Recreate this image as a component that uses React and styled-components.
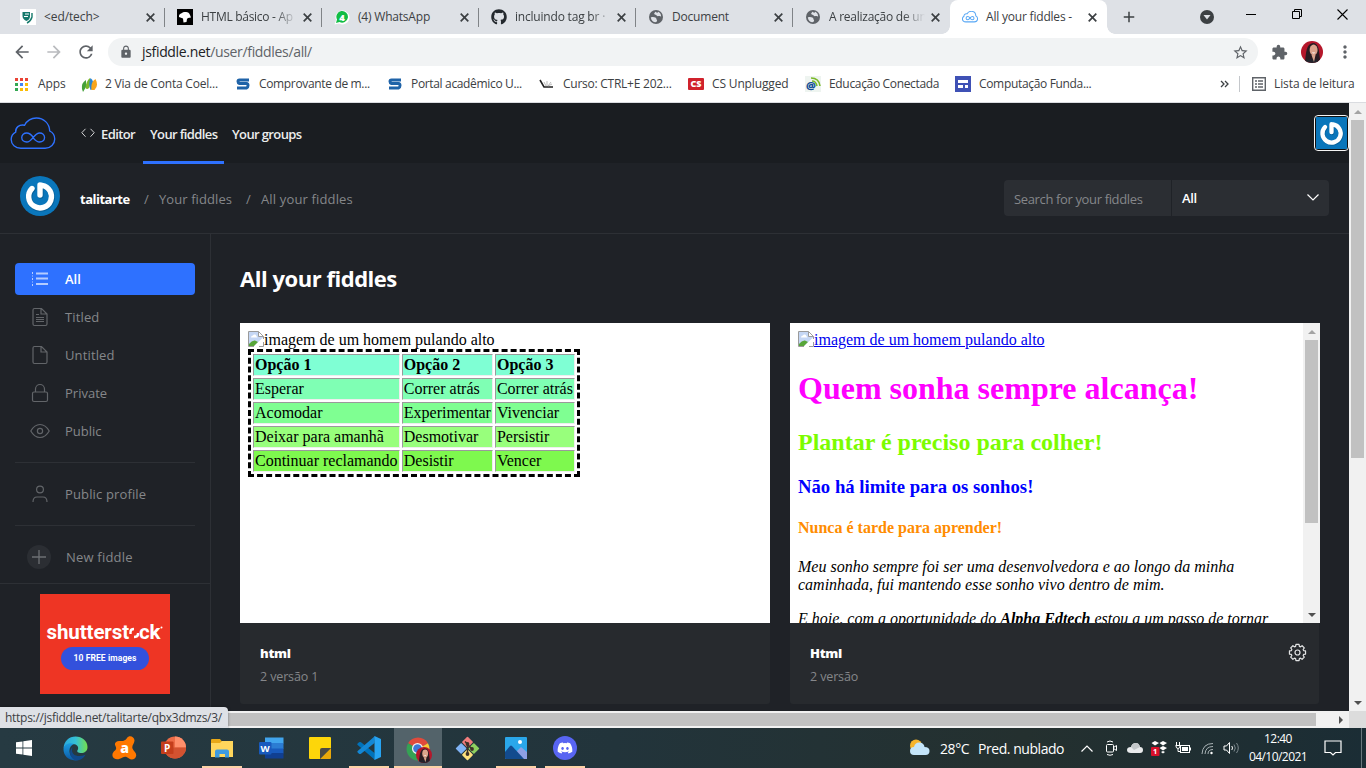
import React from "react";
import styled, { createGlobalStyle, css } from "styled-components";
import {
  MdArrowBack, MdArrowForward, MdRefresh, MdLock, MdStarBorder, MdExtension, MdMoreVert, MdAdd,
} from "react-icons/md";
import { FaGithub, FaDiscord } from "react-icons/fa";

const UI = '"Open Sans", "Noto Sans", "Liberation Sans", sans-serif';
const SERIF = '"Liberation Serif", serif';

const Global = createGlobalStyle`
  html, body { margin: 0; padding: 0; overflow: hidden; }
  * { box-sizing: border-box; }
  svg { display: block; flex: none; }
`;

const Screen = styled.div`
  width: 1366px; height: 768px; display: flex; flex-direction: column;
  overflow: hidden; font-family: ${UI}; background: #1f2227;
`;

/* ---------- Browser chrome ---------- */
const TabStrip = styled.div`
  height: 34px; flex: none; display: flex; background: #dee1e6; padding-left: 8px;
`;
const Tab = styled.div`
  width: 157px; height: 34px; flex: none; position: relative; display: flex; align-items: center;
  padding: 0 10px 0 12px; color: #3c4043;
  border-radius: 8px 8px 0 0;
  background: ${(p) => (p.$active ? "#fff" : "transparent")};
  ${(p) => p.$line && css`
    &::after { content: ""; position: absolute; right: 0; top: 8px; width: 1px; height: 19px; background: #808387; }
  `}
  ${(p) => p.$active && css`
    &::before, &::after { content: ""; position: absolute; bottom: 0; width: 8px; height: 8px; }
    &::before { left: -8px; background: radial-gradient(circle at 0 0, transparent 7.5px, #fff 8px); }
    &::after { right: -8px; background: radial-gradient(circle at 100% 0, transparent 7.5px, #fff 8px); }
  `}
`;
const TabTitle = styled.span`
  margin-left: 8px; flex: 1; height: 18px; white-space: nowrap; line-height: 18px;
  font-size: 12px; letter-spacing: ${(p) => p.$ls || 0}px;
  ${(p) => p.$fade && css`mask-image: linear-gradient(90deg, #000 ${p.$fade - 22}px, transparent ${p.$fade}px);`}
`;
const TabClose = () => (
  <svg width="9" height="9" viewBox="0 0 9 9" stroke="#3c4043" strokeWidth="1.700"><path d="M.7.700l7.600 7.600M8.300.700.7 8.300" /></svg>
);
const WindowButtons = styled.div`
  flex: 1; display: flex; align-items: center; height: 34px; color: #3c4043;
  & > :nth-child(1) { margin-left: 13px; }
  & > :nth-child(2) { margin-left: 62px; }
  & > :nth-child(3) { margin-left: 32px; margin-bottom: 6px; }
  & > :nth-child(4) { margin-left: 36px; margin-bottom: 6px; }
  & > :nth-child(5) { margin-left: 35px; margin-bottom: 6px; }
`;
const Toolbar = styled.div`
  height: 36px; flex: none; background: #fff; display: flex; align-items: center; color: #5f6368;
`;
const NavButtons = styled.div`
  width: 108px; display: flex; padding-left: 12px; gap: 12px;
`;
const Omnibox = styled.div`
  width: 1150px; height: 28px; border-radius: 14px; background: #f1f3f4; display: flex; align-items: center;
  padding: 0 9px 0 11px;
`;
const Url = styled.span`
  margin-left: 9px; flex: 1; font-size: 14px; line-height: 20px; color: #5f6368; letter-spacing: -0.33px;
  b { font-weight: 400; color: #202124; }
`;
const ToolbarEnd = styled.div`
  display: flex; align-items: center; padding-left: 13px; gap: 12.5px;
`;
const Bookmarks = styled.div`
  height: 33px; flex: none; background: #fff; border-bottom: 1px solid #dadce0; display: flex; align-items: center;
  padding: 0 0 4px 15px; color: #3c4043;
`;
const Bookmark = styled.div`
  width: ${(p) => p.$w}px; flex: none; display: flex; align-items: center; white-space: nowrap;
`;
const BookmarkIcon = styled.span`
  width: ${(p) => p.$w || 25}px; flex: none; display: flex;
`;
const BookmarkLabel = styled.span`
  font-size: 12px; line-height: 16px; white-space: nowrap; letter-spacing: ${(p) => p.$ls || 0}px;
`;
const MoreBookmarks = styled.span` margin-left: 115px; `;
const BookmarkRule = styled.i`
  width: 1px; height: 16px; background: #c4c7cb; margin: 0 12px 0 9px;
`;

/* ---------- Scrollbars ---------- */
const VScroll = styled.div`
  width: 17px; flex: none; background: #f1f1f1; display: flex; flex-direction: column; align-items: center;
`;
const VArrow = styled.i`
  height: 17px; width: 17px; flex: none; display: flex; align-items: center; justify-content: center;
  &::before { content: ""; border: 4px solid transparent; border-width: ${(p) => (p.$down ? "4px 4px 0" : "0 4px 4px")};
    border-${(p) => (p.$down ? "top" : "bottom")}-color: ${(p) => (p.$down ? "#505050" : "#a3a3a3")}; }
`;
const VThumb = styled.i`
  width: 13px; height: ${(p) => p.$h}px; background: #c1c1c1; margin-bottom: auto;
`;
const HScroll = styled.div`
  height: 17px; flex: none; background: #f1f1f1; display: flex; align-items: center; position: relative;
`;
const HThumb = styled.i`
  width: 1299px; height: 13px; margin-left: 17px; background: #c1c1c1;
`;
const HArrow = styled.i`
  width: 33px; height: 17px; display: flex; align-items: center; padding-left: 23px;
  &::before { content: ""; border: 4px solid transparent; border-width: 4px 0 4px 4px; border-left-color: #505050; }
`;
const Corner = styled.i` width: 17px; height: 17px; background: #dcdcdc; `;
const StatusBubble = styled.div`
  position: absolute; left: 0; bottom: 0; width: 228px; height: 21px; background: #dee1e6; color: #3c4043;
  border-radius: 0 4px 0 0; font-size: 12px; line-height: 21px; padding-left: 5px; letter-spacing: -0.28px;
  box-shadow: 0 0 3px rgba(0,0,0,.4); white-space: nowrap; clip-path: inset(-3px -3px 0 0);
`;

/* ---------- Page ---------- */
const Viewport = styled.div` height: 608px; flex: none; display: flex; `;
const Page = styled.div`
  width: 1349px; height: 608px; display: flex; flex-direction: column; overflow: hidden; background: #1f2227;
`;
const SiteHeader = styled.header`
  height: 60px; flex: none; background: #1a1d21; display: flex; align-items: flex-start; padding-left: 10px;
`;
const LogoBox = styled.div` width: 71px; padding-top: 14px; `;
const NavLink = styled.a`
  height: 61px; display: flex; align-items: center; gap: 6px; color: #eceded; font-size: 13px; font-weight: 600;
  padding: 4px ${(p) => p.$px || 0}px 0; margin-right: 8px; letter-spacing: ${(p) => p.$ls}px; white-space: nowrap;
  border-bottom: 3px solid ${(p) => (p.$active ? "#2e71ff" : "transparent")};
  width: ${(p) => p.$w}px; position: relative;
`;
const HeaderAvatar = styled.div`
  margin: 12px 0 0 auto; width: 35px; height: 36px; border: 1px solid #f5f5f5; border-radius: 4px; padding: 1px;
  background: #101010;
`;
const SubHeader = styled.div`
  height: 71px; flex: none; border-bottom: 1px solid #2d3035; display: flex; align-items: center; padding: 0 20px 0 20px;
`;
const CircleAvatar = styled.div` margin: -5px 20px 0 0; `;
const Crumb = styled.span`
  font-size: 13px; line-height: 20px; white-space: nowrap; letter-spacing: ${(p) => p.$ls || 0}px;
  color: ${(p) => (p.$user ? "#fff" : "#85878a")}; font-weight: ${(p) => (p.$user ? 700 : 400)};
  width: ${(p) => p.$w}px; padding-top: 2px;
`;
const SearchGroup = styled.div`
  margin: -1px 0 0 auto; width: 325px; height: 36px; display: flex; gap: 1px; color: #85878a; font-size: 13px;
`;
const SearchInput = styled.div`
  width: 167px; background: #2b2e33; border-radius: 4px 0 0 4px; padding-left: 10px; line-height: 38px; letter-spacing: -0.36px; white-space: nowrap;
`;
const SearchSelect = styled.div`
  flex: 1; background: #2b2e33; border-radius: 0 4px 4px 0; padding: 0 10px; display: flex; align-items: center;
  justify-content: space-between; color: #fff; font-weight: 600; line-height: 38px; letter-spacing: -0.3px;
`;
const Columns = styled.div` flex: 1; display: flex; min-height: 0; `;
const Sidebar = styled.aside`
  width: 211px; flex: none; border-right: 1px solid #2d3035; display: flex; flex-direction: column; padding-top: 29px;
`;
const SideItem = styled.a`
  height: 32px; margin: 0 15px ${(p) => p.$mb ?? 6}px; border-radius: 4px; display: flex; align-items: center; flex: none;
  padding-left: 11px; font-size: 13px; letter-spacing: ${(p) => p.$ls ?? 0.14}px;
  color: ${(p) => (p.$active ? "#fff" : "#85878a")}; background: ${(p) => (p.$active ? "#2e71ff" : "transparent")};
  font-weight: ${(p) => (p.$active ? 600 : 400)};
  svg { margin-right: 11px; }
`;
const SideRule = styled.i` height: 1px; flex: none; background: #2d3035; margin: 0 15px 15px; `;
const AdArea = styled.div`
  border-top: 1px solid #2d3035; margin-top: 10px; padding-top: 10px; display: flex; justify-content: center;
`;
const Ad = styled.div`
  width: 130px; height: 100px; background: #ee3524; display: flex; flex-direction: column; align-items: center;
`;
const AdBrand = styled.div`
  margin-top: 23px; height: 30px; color: #fff; display: flex; align-items: center; font: 700 20.5px/29px "Roboto", sans-serif;
  letter-spacing: -0.1px; white-space: nowrap;
`;
const AdButton = styled.div`
  width: 88px; height: 23px; border-radius: 12px; background: #3351dc; color: #fff; text-align: center;
  font: 700 8.5px/23px "Roboto", sans-serif; letter-spacing: .1px;
`;
const Main = styled.main` flex: 1; padding: 29px 0 0 29px; `;
const Title = styled.h1`
  margin: 0 0 28px; height: 32px; line-height: 31px; font-size: 22px; font-weight: 700; color: #fff; letter-spacing: -0.47px;
`;
const Cards = styled.div` display: flex; gap: 20px; `;
const Card = styled.div` width: 530px; `;
const Frame = styled.div`
  height: 300px; background: #fff; display: flex; overflow: hidden; color: #000; font: 16px ${SERIF};
`;
const FrameBody = styled.div`
  flex: 1; padding: 8px 8px 0; min-width: 0;
  h1, h2, h3, h4 { font-weight: 700; line-height: normal; }
  h1 { font-size: 32px; margin: 21.44px 0; color: #f0f; }
  h2 { font-size: 24px; margin: 19.92px 0; color: #7cfc00; }
  h3 { font-size: 18.72px; margin: 18.72px 0; color: #00f; }
  h4 { font-size: 16px; margin: 21.28px 0; color: #ff8c00; }
  p { margin: 16px 0; font-style: italic; }
`;
const BrokenImage = styled.div`
  height: 18px; display: flex; align-items: flex-start; white-space: nowrap; line-height: 18px;
  color: ${(p) => (p.$link ? "#0000ee" : "#000")};
  text-decoration: ${(p) => (p.$link ? "underline" : "none")};
`;
const OptionTable = styled.table`
  border: 3px dashed #000; border-spacing: 2px; font: 16px ${SERIF}; width: 332px;
`;
const OptionRow = styled.tr`
  th, td { background: ${(p) => p.$bg}; border: 1px solid; border-color: #9a9a9a #eee #eee #9a9a9a; padding: 1px; text-align: left;
    line-height: 18px; white-space: nowrap; }
`;
const CardFoot = styled.div`
  height: 81px; width: ${(p) => p.$w || 530}px; background: #272a2e; border-radius: 0 0 3px 3px; padding: 20px 12px 0 20px; display: flex; justify-content: space-between;
`;
const CardName = styled.div` font-size: 13px; font-weight: 800; color: #fff; line-height: 20px; letter-spacing: ${(p) => p.$ls}px; `;
const CardNote = styled.div` font-size: 12.5px; color: #85878a; line-height: 20px; margin-top: 4px; letter-spacing: -0.13px; `;

/* ---------- Taskbar ---------- */
const Taskbar = styled.footer`
  height: 40px; flex: none; display: flex; background: linear-gradient(90deg, #263a42, #22343b 45%, #24302f 75%, #1b2d35); color: #fff;
`;
const TaskButton = styled.div`
  width: 48px; height: 40px; flex: none; margin-right: ${(p) => p.$mr ?? 1}px; display: flex; align-items: center; justify-content: center;
  background: ${(p) => (p.$active ? "#53636a" : "transparent")}; position: relative;
  ${(p) => p.$open && css`
    &::after { content: ""; position: absolute; bottom: 0; height: 2px; width: ${p.$active ? 48 : 40}px; background: #fcd2a6; }
  `}
`;
const Tray = styled.div` margin-left: auto; width: 457px; display: flex; align-items: center; `;
const TrayText = styled.span`
  font-size: 14px; white-space: nowrap; width: ${(p) => p.$w}px; letter-spacing: ${(p) => p.$ls || 0}px; padding-top: 1px;
`;
const TraySlot = styled.span` width: 24px; display: flex; justify-content: center; `;
const Clock = styled.div`
  width: 70px; text-align: center; font-size: 12px; line-height: 18px; letter-spacing: -0.55px; white-space: nowrap; margin-right: 11px;
`;
const DesktopEdge = styled.i` width: 1px; height: 40px; background: #69777d; margin-left: 19px; `;

/* ---------- Drawings ---------- */
const Globe = () => (
  <svg width="16" height="16" viewBox="0 0 16 16">
    <circle cx="8" cy="8" r="7" fill="#5f6368" />
    <path d="M2.800 8.400c1.600-.5 3.600-.4 5 .3.9.5.2 1.500 1 2 .6.5.2 1.400-.6 2.400-2.700.3-5-1.500-5.400-4.700zM7.300 2.700c-.4 1.100-1.500 1.200-1 2.300.5.9 1.800.7 2.300 1.500.5.8 1.400.9 2.200.6.9-.4 1.800 0 2.300.6.2-2.500-1.200-4.300-3-5-.1 1-.9 1.300-1.500.8-.4-.3-.8-.7-1.300-.8z" fill="#dee1e6" />
  </svg>
);
const cloudPath = "M11 32C5.500 32 1.200 28.200 1.200 23.100c0-3.300 1.800-6.100 4.600-7.600-.5-4.400 3.400-8.300 9.100-7.100C17.400 3.500 22 1 27 1c7.400 0 13.300 5.500 13.600 13.300 3 1.500 5.100 4.500 5.100 8.100 0 5.300-4.200 9.600-9.700 9.600z";
const loopPath = "M23.700 20.700c-2-2.600-4-4.300-6.600-4.300-2.900 0-5.100 2-5.100 4.600s2.200 4.600 5.100 4.600c5.600 0 7.400-9.200 13.200-9.200 2.800 0 5 2 5 4.600s-2.200 4.600-5 4.600c-2.500 0-4.500-1.700-6.600-4.300";
const FiddleCloud = ({ w, color, sw }) => (
  <svg width={w} height={w * 34 / 47} viewBox="0 0 47 34" fill="none" stroke={color} strokeWidth={sw}>
    <path d={cloudPath} /><path d={loopPath} />
  </svg>
);
const Gravatar = ({ size, round, width }) => (
  <svg width={width || size} height={size} viewBox="0 0 40 40" preserveAspectRatio="xMidYMid slice">
    {round ? <circle cx="20" cy="20" r="20" fill="#0a76bb" /> : <rect width="40" height="40" fill="#0a76bb" />}
    <g fill="none" strokeLinecap="round">
      <path d="M12 12.500a11.400 11.400 0 1 0 10-3.200M20 9v10" stroke="#055486" strokeWidth="6" transform="translate(.6 .8)" opacity=".6" />
      <path d="M12 12.500a11.400 11.400 0 1 0 10-3.200M20 9v10" stroke="#fff" strokeWidth="5.400" />
    </g>
  </svg>
);
const Portrait = ({ size }) => (
  <svg width={size} height={size} viewBox="0 0 22 22">
    <defs><clipPath id={"face" + size}><circle cx="11" cy="11" r="11" /></clipPath></defs>
    <g clipPath={`url(#face${size})`}>
      <rect width="22" height="22" fill="#b5172b" />
      <path d="M4 20C5 13 5 2.500 12 2c5.500 0 6 7 6.500 12l1 8z" fill="#2a1c22" />
      <path d="M3 22c1-3 4-4 8-4s6 1 7 4z" fill="#23242c" />
      <ellipse cx="12.600" cy="9" rx="4" ry="5.400" fill="#dca48c" />
      <path d="M10.500 14h4l-1.500 7z" fill="#d8a58d" />
      <path d="M10.800 11.500q1.800 2 3.600 0z" fill="#fff" />
    </g>
  </svg>
);
const SLogo = () => (
  <svg width="14" height="12" viewBox="0 0 14 12"><path d="M13 2H3.500Q2 2 2 3.500T3.500 5.500h7Q12 5.500 12 7.500T10.500 10H1" fill="none" stroke="#1f63a8" strokeWidth="3" /></svg>
);
const Broken = () => (
  <svg width="16" height="16" viewBox="0 0 16 16">
    <path d="M.5.500h10l5 5v10H.5z" fill="#fff" />
    <path d="M1 1h9.500v4.500H15V7L6 15H1z" fill="#c5d7f5" />
    <path d="M3 6.500q0-2 2-2 .5-1.500 2-1 1.500.5 1.300 1.700 1.200.3 1 1.300z" fill="#fff" />
    <path d="M1 15v-2q3-4 6-3.500l3 1.500L6 15z" fill="#57a639" />
    <path d="M15.500 6 6 15.500h3.500L16 9.500z" fill="#fff" />
    <path d="M6 15.500H.5V.500h10l5 5V8M10.500.500v5h5M15.500 11v4.500H11" fill="none" stroke="#9b9b9b" />
  </svg>
);
const SideIcon = ({ kind, active }) => (
  <svg width="28" height="24" viewBox="0 0 28 24" fill="none" stroke={active ? "#b4ccff" : "#626569"} strokeWidth="1.200">
    {kind === "all" && <path d="M10 6.500h12M10 11.500h12M10 17h12" strokeWidth="1.800" />}
    {kind === "all" && <path d="M6.500 5v2M6.500 8.500v1M6.500 11v2M6.500 14.500v1M6.500 17v2" strokeWidth="1" />}
    {(kind === "titled" || kind === "untitled") && <path d="M15.500 3.500H8.500Q7 3.500 7 5v14q0 1.500 1.500 1.500h11q1.500 0 1.500-1.500V9zM15 3.500V9h6" />}
    {kind === "titled" && <path d="M10 9.500h3M10 12.500h8M10 14.500h8M10 16.500h8" strokeWidth="1" />}
    {kind === "private" && <><rect x="6.500" y="11" width="15" height="9.500" rx="1.500" /><path d="M9.500 11V8a4.500 4.500 0 0 1 9 0v3" /></>}
    {kind === "public" && <><path d="M4.800 12Q8.500 5.500 14 5.500T23.200 12Q19.500 18.500 14 18.500T4.800 12z" /><circle cx="14" cy="12" r="2.600" /></>}
    {kind === "profile" && <><circle cx="14" cy="7.500" r="3.400" /><path d="M7 20q0-5 4-5h6q4 0 4 5" /></>}
  </svg>
);
const gearPath = (() => {
  let d = "";
  for (let i = 0; i < 8; i++) {
    [[-0.3, 6.4], [-0.19, 8.2], [0.19, 8.2], [0.3, 6.4]].forEach(([off, r], k) => {
      const a = (i * Math.PI) / 4 + off;
      d += `${i === 0 && k === 0 ? "M" : "L"}${(9.5 + r * Math.sin(a)).toFixed(2)} ${(9.5 - r * Math.cos(a)).toFixed(2)}`;
    });
  }
  return d + "z";
})();
const Gear = () => (
  <svg width="19" height="19" viewBox="0 0 19 19" fill="none" stroke="#e3e4e5" strokeWidth="1.200" strokeLinejoin="round">
    <path d={gearPath} /><circle cx="9.500" cy="9.500" r="2.500" />
  </svg>
);
const PetalMark = () => (
  <svg width="17" height="15" viewBox="0 0 17 15">
    <path d="M1 12Q0 6 5 3v7l-3 5z" fill="#45a13a" /><path d="M4.500 11Q5 4 9 1q1 6-1 10-2 2-3.500 0z" fill="#7bb82c" />
    <path d="M9.500 13Q7 7 9.500 1q4 3 3 11z" fill="#2a86d1" /><path d="M10.500 13q-1-8 4-11 3.500 7-1 11z" fill="#f7a51c" />
  </svg>
);
const AppsGrid = () => (
  <svg width="13" height="13" viewBox="0 0 13 13">
    {["#ea4335", "#ea4335", "#ea4335", "#34a853", "#4285f4", "#fbbc04", "#34a853", "#fbbc04", "#fbbc04"].map((c, i) => (
      <rect key={i} x={(i % 3) * 5} y={Math.floor(i / 3) * 5} width="3" height="3" fill={c} />
    ))}
  </svg>
);

const EdgeIcon = () => (
  <svg width="25" height="25" viewBox="0 0 25 25">
    <defs>
      <linearGradient id="edgeTop"><stop offset="0" stopColor="#2aa9dd" /><stop offset=".5" stopColor="#35c1d8" /><stop offset="1" stopColor="#74e04c" /></linearGradient>
      <linearGradient id="edgeSide" x2="0" y2="1"><stop offset="0" stopColor="#1b9de2" /><stop offset="1" stopColor="#0c59a4" /></linearGradient>
    </defs>
    <path d="M.6 12.500C.8 5 6 .5 12.600.5 19 .5 24.500 5 24.500 11c0 4-3 6-6.300 6-3 0-4.700-1.300-3.700-2.700 2-3-.5-6.300-4.500-6.300C5.500 8 1.500 10 .6 12.500z" fill="url(#edgeTop)" />
    <path d="M.5 13C1 8.500 6 6 11 8c-3 1-5 4-4.500 8 .5 4.500 4.500 7.500 9 8C7 26 .3 20.500.5 13z" fill="url(#edgeSide)" />
    <path d="M9.500 11C7 19 14 22 22.500 18.800 20 23.500 15 25.500 11.500 24 6.500 21.500 5.500 15 9.500 11z" fill="#114a8b" />
  </svg>
);
const AvastIcon = () => (
  <svg width="25" height="25" viewBox="0 0 25 25">
    <path d="M15 2c2-3.200 7.500-1.500 7.500 2.500 0 3-3 5-2 8 1 2.500 4 4 3.700 7-.4 3.500-4.500 5.200-7.200 3-2.500-2-4-2.500-6.500-1-3 1.700-6 2.700-8.500.7C-1 19.500.8 16 3 14.500 5 13 4 11 3 9 2.500 6.500 5 4.500 8 5c3 .4 5.500-.5 7-3z" fill="#ff7800" />
    <text x="12.500" y="17" textAnchor="middle" fill="#fff" fontFamily="Open Sans" fontWeight="800" fontSize="14">a</text>
  </svg>
);
const PowerPointIcon = () => (
  <svg width="25" height="24" viewBox="0 0 25 24">
    <circle cx="14" cy="11.500" r="11" fill="#ed6c47" /><path d="M14 .5a11 11 0 0 1 11 11H14z" fill="#ff8f6b" />
    <path d="M3 11.500h22a11 11 0 0 1-22 0z" fill="#d35230" />
    <rect x="0" y="5.500" width="12.500" height="12.500" rx="1" fill="#c43e1c" />
    <text x="6.200" y="15.500" textAnchor="middle" fill="#fff" fontFamily="Open Sans" fontWeight="700" fontSize="10">P</text>
  </svg>
);
const WordIcon = () => (
  <svg width="25" height="23" viewBox="0 0 25 23">
    <rect x="6" y=".5" width="18.500" height="6" fill="#41a5ee" /><rect x="6" y="6" width="18.500" height="6" fill="#2b7cd3" />
    <rect x="6" y="11.500" width="18.500" height="5" fill="#185abd" /><rect x="6" y="16" width="18.500" height="5.500" fill="#103f91" />
    <rect x="0" y="5" width="12.500" height="12.500" rx="1" fill="#185abd" />
    <text x="6.200" y="14.800" textAnchor="middle" fill="#fff" fontFamily="Open Sans" fontWeight="700" fontSize="9.500">W</text>
  </svg>
);
const FolderIcon = () => (
  <svg width="22" height="19" viewBox="0 0 22 19">
    <path d="M0 1q0-1 1-1h8l2 2.500h11V17q0 1-1 1H0z" fill="#e8a817" /><path d="M0 4h9l2-2h11v16H0z" fill="#ffd65c" />
    <path d="M4 18.500v-6q0-2 2-2h10q2 0 2 2v6h-4V15H8.500v3.500z" fill="#3f9be0" />
  </svg>
);
const NotesIcon = () => (
  <svg width="22" height="22" viewBox="0 0 22 22"><path d="M0 1q0-1 1-1h20q1 0 1 1v10l-11 11H1q-1 0-1-1z" fill="#fdd60a" /><path d="M22 11v10q0 1-1 1H11z" fill="#e9a80b" /><path d="M11 22v-9q0-2 2-2h9z" fill="#4a4a45" /></svg>
);
const CodeIcon = () => (
  <svg width="24" height="24" viewBox="0 0 24 24">
    <path d="M17.500 17 4 6.200Q3 5.600 2 6.300L.7 7.500q-.8.700 0 1.500L18 24z" fill="#0072ba" />
    <path d="M17.500 7 4 17.800q-1 .6-2 0L.7 16.500q-.8-.7 0-1.500L18 0z" fill="#1487d4" />
    <path d="M17.500 0 24 3v18l-6.500 3z" fill="#27a4f2" />
  </svg>
);
const chromeArc = (a, b) => {
  const pt = (r, d) => `${12 + r * Math.cos((d * Math.PI) / 180)} ${12 + r * Math.sin((d * Math.PI) / 180)}`;
  return `M12 12L${pt(11.5, a)}A11.5 11.5 0 0 1 ${pt(11.5, b)}z`;
};
const ChromeWrap = styled.span`
  position: relative; display: block; margin-top: 2px;
  & > svg + svg { position: absolute; right: -2px; bottom: -2px; }
`;
const ChromeIcon = () => (
  <ChromeWrap>
    <svg width="24" height="24" viewBox="0 0 24 24">
      <path d={chromeArc(-150, -30)} fill="#e04a3c" /><path d={chromeArc(-30, 90)} fill="#fcc934" /><path d={chromeArc(90, 210)} fill="#35a254" />
      <circle cx="11.500" cy="11.500" r="5.500" fill="#f3f4f4" /><circle cx="11.500" cy="11.500" r="4.300" fill="#3f78d9" />
    </svg>
    <Portrait size={16} />
  </ChromeWrap>
);
const GitIcon = () => (
  <svg width="25" height="25" viewBox="0 0 25 25">
    <g transform="rotate(45 12.500 12.500)">
      <rect x="4" y="4" width="8" height="8" rx=".8" fill="#f27d7d" /><rect x="13" y="4" width="8" height="8" rx=".8" fill="#8ed05f" />
      <rect x="4" y="13" width="8" height="8" rx=".8" fill="#80b3f5" /><rect x="13" y="13" width="8" height="8" rx=".8" fill="#ffe27d" />
    </g>
    <path d="M10 5.500l2.500 2.500v10M12.500 8.500l4.500 4.500" stroke="#3d3027" strokeWidth="1.600" fill="none" />
    <circle cx="12.500" cy="18" r="1.900" fill="#3d3027" /><circle cx="17" cy="13" r="1.900" fill="#3d3027" /><circle cx="12.500" cy="8" r="1.900" fill="#3d3027" />
  </svg>
);
const PhotosIcon = () => (
  <svg width="22" height="22" viewBox="0 0 22 22">
    <rect width="22" height="22" rx="1" fill="#2aa7ea" /><path d="M11 15l5-5 6 5v7H11z" fill="#8ea0e4" />
    <path d="M0 15l5-6q1-1 2 0l12 13H1q-1 0-1-1z" fill="#134b8e" /><circle cx="15" cy="5" r="2" fill="#fff" />
  </svg>
);
const DiscordBadge = styled.span`
  width: 24px; height: 24px; border-radius: 50%; background: #5865f2; display: flex; align-items: center; justify-content: center;
`;

const tabs = [
  { title: "<ed/tech>", ls: -0.1, icon: <svg width="16" height="16" viewBox="0 0 16 16"><rect width="16" height="16" fill="#fff" /><path d="M2.500 3H10v4q0 4-3.700 5Q2.500 10 2.500 7z" fill="#15796b" /><path d="M4 7.500h4M5 5h4" stroke="#fff" /><path d="M12 4v4q-1 4-5 6" fill="none" stroke="#15796b" strokeWidth="1.400" /></svg> },
  { title: "HTML básico - Ap", ls: -0.28, fade: 96, icon: <svg width="16" height="16" viewBox="0 0 16 16"><rect width="16" height="16" fill="#000" /><path d="M2 8q-.5-3 3-4 1-1.500 4-1 3 0 4 3l1 2.500-3 .5-1 1-.5 3-3 .5-.5-4z" fill="#fff" /></svg> },
  { title: "(4) WhatsApp", ls: -0.2, icon: <svg width="16" height="16" viewBox="0 0 16 16"><path d="M.5 15.500 2 11A7 7 0 1 1 5 14.500z" fill="#fff" /><path d="M2 14l1-3.500A5.800 5.800 0 1 1 5.500 13z" fill="#12bd45" /><text x="8" y="11.500" textAnchor="middle" fill="#fff" fontFamily="Open Sans" fontWeight="800" fontSize="9.500">4</text></svg> },
  { title: "incluindo tag br ·", ls: -0.2, fade: 98, icon: <FaGithub size={16} color="#24292e" /> },
  { title: "Document", ls: -0.2, icon: <Globe /> },
  { title: "A realização de un", ls: -0.25, fade: 96, icon: <Globe /> },
  { title: "All your fiddles -", ls: -0.2, active: true, icon: <FiddleCloud w={16} color="#59a8f5" sw={3} /> },
];
const bookmarks = [
  { label: "Apps", w: 66, iw: 23, ls: -0.1, icon: <AppsGrid /> },
  { label: "2 Via de Conta Coel...", w: 155, iw: 24, ls: -0.2, icon: <PetalMark /> },
  { label: "Comprovante de m...", w: 152, iw: 23, ls: -0.34, icon: <SLogo /> },
  { label: "Portal acadêmico U...", w: 151, iw: 23, ls: -0.34, icon: <SLogo /> },
  { label: "Curso: CTRL+E 202...", w: 149, iw: 24, ls: -0.25, icon: <svg width="16" height="14" viewBox="0 0 16 14"><path d="M1 3l4 7h9" fill="none" stroke="#222" strokeWidth="1.600" /><path d="M7 9 5 5m3 4V4m1 5 3-4M9 9l4-2" stroke="#aaa" strokeWidth=".8" /></svg> },
  { label: "CS Unplugged", w: 117, iw: 24, ls: -0.15, icon: <svg width="16" height="12" viewBox="0 0 16 12"><rect width="16" height="12" rx="1" fill="#d0222c" /><text x="8" y="9.300" textAnchor="middle" fill="#fff" fontFamily="Open Sans" fontWeight="800" fontSize="9">CS</text></svg> },
  { label: "Educação Conectada", w: 150, iw: 24, ls: -0.33, icon: <svg width="16" height="16" viewBox="0 0 16 16"><rect width="16" height="16" fill="#eef4f0" /><text x="6" y="14" textAnchor="middle" fill="#124f96" fontFamily="Open Sans" fontWeight="800" fontSize="11">@</text><path d="M7 5q4 0 5 5M6 2q8 0 9 8" fill="none" stroke="#7ab929" strokeWidth="1.600" /></svg> },
  { label: "Computação Funda...", w: 150, iw: 24, ls: -0.33, icon: <svg width="16" height="16" viewBox="0 0 16 16"><rect width="16" height="16" fill="#3f51b5" /><path d="M3 4h10v3H3zM3 9h5v3H3zM10 9h3v3h-3z" fill="#fff" /></svg> },
];
const tableRows = [
  ["Esperar", "Correr atrás", "Correr atrás", "#7fffb4"],
  ["Acomodar", "Experimentar", "Vivenciar", "#7fff92"],
  ["Deixar para amanhã", "Desmotivar", "Persistir", "#98ff7c"],
  ["Continuar reclamando", "Desistir", "Vencer", "#7ef94e"],
];
const taskItems = [
  [<EdgeIcon />], [<AvastIcon />], [<PowerPointIcon />], [<FolderIcon />, true], [<WordIcon />], [<NotesIcon />],
  [<CodeIcon />, true], [<ChromeIcon />, true, true], [<GitIcon />], [<PhotosIcon />, true],
  [<DiscordBadge><FaDiscord size={16} color="#fff" /></DiscordBadge>, true],
];

export default function App() {
  return (
    <Screen>
      <Global />
      <TabStrip>
        {tabs.map((t, i) => (
          <Tab key={i} $active={t.active} $line={i < 5}>
            {t.icon}
            <TabTitle $ls={t.ls} $fade={t.fade}>{t.title}</TabTitle>
            <TabClose />
          </Tab>
        ))}
        <WindowButtons>
          <MdAdd size={18} />
          <svg width="14" height="14" viewBox="0 0 14 14"><circle cx="7" cy="7" r="7" fill="#3c4043" /><path d="M3.500 5h7L7 9.500z" fill="#dee1e6" /></svg>
          <svg width="10" height="10" viewBox="0 0 10 10"><path d="M0 5.500h10" stroke="#000" /></svg>
          <svg width="10" height="10" viewBox="0 0 10 10" fill="none" stroke="#000"><path d="M.5 2.500h7v7h-7zM2.500 2.500v-2h7v7h-2" /></svg>
          <svg width="11" height="11" viewBox="0 0 11 11"><path d="M.5.500l10 10M10.500.500l-10 10" stroke="#000" strokeWidth="1.100" /></svg>
        </WindowButtons>
      </TabStrip>
      <Toolbar>
        <NavButtons><MdArrowBack size={20} /><MdArrowForward size={20} color="#b9bbbe" /><MdRefresh size={20} /></NavButtons>
        <Omnibox>
          <MdLock size={14} />
          <Url><b>jsfiddle.net</b>/user/fiddles/all/</Url>
          <MdStarBorder size={17} />
        </Omnibox>
        <ToolbarEnd><MdExtension size={17} /><Portrait size={22} /><MdMoreVert size={20} /></ToolbarEnd>
      </Toolbar>
      <Bookmarks>
        {bookmarks.map((b) => (
          <Bookmark key={b.label} $w={b.w}>
            <BookmarkIcon $w={b.iw}>{b.icon}</BookmarkIcon>
            <BookmarkLabel $ls={b.ls}>{b.label}</BookmarkLabel>
          </Bookmark>
        ))}
        <MoreBookmarks>
          <svg width="10" height="8" viewBox="0 0 10 8" fill="none" stroke="#3c4043" strokeWidth="1.300"><path d="M1 1l3 3-3 3M5 1l3 3-3 3" /></svg>
        </MoreBookmarks>
        <BookmarkRule />
        <BookmarkIcon $w={22}>
          <svg width="14" height="14" viewBox="0 0 14 14" fill="none" stroke="#5f6368" strokeWidth="1.400"><path d="M.7.700h12.600v12.600H.7zM3 4h2M6 4h5M3 7h2M6 7h5M3 10h2M6 10h5" /></svg>
        </BookmarkIcon>
        <BookmarkLabel $ls={-0.1}>Lista de leitura</BookmarkLabel>
      </Bookmarks>

      <Viewport>
        <Page>
          <SiteHeader>
            <LogoBox><FiddleCloud w={46} color="#2e71ff" sw={1.4} /></LogoBox>
            <NavLink $w={54} $ls={-0.6}>
              <svg width="14" height="13" viewBox="0 0 14 13" fill="none" stroke="#d5d6d7"><path d="M4.500.800.800 4.700l3.700 4M9.500.800l3.700 3.900-3.700 4" /></svg>
              Editor
            </NavLink>
            <NavLink $active $w={81} $px={7} $ls={-0.62}>Your fiddles</NavLink>
            <NavLink $w={80} $ls={-0.62}>Your groups</NavLink>
            <HeaderAvatar><Gravatar size={32} width={31} /></HeaderAvatar>
          </SiteHeader>
          <SubHeader>
            <CircleAvatar><Gravatar size={40} round /></CircleAvatar>
            <Crumb $user $w={64} $ls={-0.5}>talitarte</Crumb>
            <Crumb $w={15}>/</Crumb>
            <Crumb $w={87} $ls={0.08}>Your fiddles</Crumb>
            <Crumb $w={15}>/</Crumb>
            <Crumb $ls={0.15}>All your fiddles</Crumb>
            <SearchGroup>
              <SearchInput>Search for your fiddles</SearchInput>
              <SearchSelect>
                All
                <svg width="12" height="7" viewBox="0 0 12 7" fill="none" stroke="#fff" strokeWidth="1.200"><path d="M.5.500 6 6 11.500.500" /></svg>
              </SearchSelect>
            </SearchGroup>
          </SubHeader>
          <Columns>
            <Sidebar>
              <SideItem $active $ls={0}><SideIcon kind="all" active />All</SideItem>
              <SideItem><SideIcon kind="titled" />Titled</SideItem>
              <SideItem><SideIcon kind="untitled" />Untitled</SideItem>
              <SideItem $ls={0}><SideIcon kind="private" />Private</SideItem>
              <SideItem $mb={15} $ls={0}><SideIcon kind="public" />Public</SideItem>
              <SideRule />
              <SideItem $mb={15}><SideIcon kind="profile" />Public profile</SideItem>
              <SideRule />
              <SideItem $mb={0} $ls={0.2}>
                <svg width="29" height="24" viewBox="0 0 29 24"><circle cx="13" cy="12" r="12" fill="#2b2e33" /><path d="M13 5v14M6 12h14" stroke="#6d7074" strokeWidth="1.300" /></svg>
                New fiddle
              </SideItem>
              <AdArea>
                <Ad>
                  <AdBrand>
                    shutterst
                    <svg width="10" height="14" viewBox="0 0 10 14" fill="none" stroke="#fff" strokeWidth="2.400"><path d="M1.500 9V7q0-3 3.500-3M9 8v1q0 3-4 3" /></svg>
                    ck
                    <svg width="3" height="14" viewBox="0 0 3 14"><circle cx="1.500" cy="2.500" r="1" fill="#fff" /></svg>
                  </AdBrand>
                  <AdButton>10 FREE images</AdButton>
                </Ad>
              </AdArea>
            </Sidebar>
            <Main>
              <Title>All your fiddles</Title>
              <Cards>
                <Card>
                  <Frame>
                    <FrameBody>
                      <BrokenImage><Broken />imagem de um homem pulando alto</BrokenImage>
                      <OptionTable>
                        <tbody>
                          <OptionRow $bg="#7fffd4"><th>Opção 1</th><th>Opção 2</th><th>Opção 3</th></OptionRow>
                          {tableRows.map(([a, b, c, bg]) => (
                            <OptionRow key={a} $bg={bg}><td>{a}</td><td>{b}</td><td>{c}</td></OptionRow>
                          ))}
                        </tbody>
                      </OptionTable>
                    </FrameBody>
                  </Frame>
                  <CardFoot>
                    <div><CardName $ls={-0.3}>html</CardName><CardNote>2 versão 1</CardNote></div>
                  </CardFoot>
                </Card>
                <Card>
                  <Frame>
                    <FrameBody>
                      <BrokenImage $link><Broken />imagem de um homem pulando alto</BrokenImage>
                      <h1>Quem sonha sempre alcança!</h1>
                      <h2>Plantar é preciso para colher!</h2>
                      <h3>Não há limite para os sonhos!</h3>
                      <h4>Nunca é tarde para aprender!</h4>
                      <p>Meu sonho sempre foi ser uma desenvolvedora e ao longo da minha caminhada, fui mantendo esse sonho vivo dentro de mim.</p>
                      <p>E hoje, com a oportunidade do <b>Alpha Edtech</b> estou a um passo de tornar</p>
                    </FrameBody>
                    <VScroll>
                      <VArrow /><VThumb $h={183} /><VArrow $down />
                    </VScroll>
                  </Frame>
                  <CardFoot $w={529}>
                    <div><CardName $ls={-0.3}>Html</CardName><CardNote>2 versão</CardNote></div>
                    <Gear />
                  </CardFoot>
                </Card>
              </Cards>
            </Main>
          </Columns>
        </Page>
        <VScroll><VArrow /><VThumb $h={338} /><VArrow $down /></VScroll>
      </Viewport>
      <HScroll>
        <HThumb /><HArrow /><Corner />
        <StatusBubble>https://jsfiddle.net/talitarte/qbx3dmzs/3/</StatusBubble>
      </HScroll>

      <Taskbar>
        <TaskButton $mr={3}>
          <svg width="16" height="16" viewBox="0 0 16 16" fill="#fff"><path d="M0 2.300 6.500 1.400v6.200H0zM7.300 1.300 16 0v7.600H7.300zM0 8.400h6.500v6.200L0 13.700zM7.300 8.400H16V16l-8.700-1.300z" /></svg>
        </TaskButton>
        {taskItems.map(([icon, open, active], i) => (
          <TaskButton key={i} $open={open} $active={active}>{icon}</TaskButton>
        ))}
        <Tray>
          <svg width="31" height="18" viewBox="0 0 31 18"><circle cx="7" cy="6.500" r="6" fill="#f7b52c" /><path d="M5 16q-4 0-4-4t4-4q1-5 6-4.500 4 .5 4.500 4.500 5 0 5 4t-4 4z" fill="#c4e5fa" /></svg>
          <TrayText $w={38} $ls={-0.4}>28°C</TrayText>
          <TrayText $w={97} $ls={-0.45}>Pred. nublado</TrayText>
          <TraySlot><svg width="12" height="7" viewBox="0 0 12 7" fill="none" stroke="#fff" strokeWidth="1.200"><path d="M.5 6.500 6 1l5.500 5.500" /></svg></TraySlot>
          <TraySlot><svg width="13" height="16" viewBox="0 0 13 16" fill="none" stroke="#fff"><rect x="1.500" y="4.500" width="7" height="7.500" rx="1" /><path d="M8.500 7.500l3-2v5l-3-2M2 2q3-2 6 0M2 14.500q3 1.500 6 0" /></svg></TraySlot>
          <TraySlot><svg width="16" height="10" viewBox="0 0 16 10"><path d="M4 10Q0 10 0 7t4-3q1-4 5-4 3 0 4 4 3 0 3 3t-3 3z" fill="#e9ebec" /><path d="M4 4q1-4 5-4 3 0 4 4l-6 3z" fill="#c3c7c9" /></svg></TraySlot>
          <TraySlot><svg width="16" height="16" viewBox="0 0 16 16"><path d="M4 1l4 2-4 2.500L.5 3zM12 1l4 2-4 2.500L8.500 3zM12 6l4 2-4 2.500L8.500 8zM10 12l2-1 2 1-2 1.500z" fill="#fff" /><rect x="0" y="7" width="8.500" height="9" rx="1" fill="#d8102a" /><text x="4.200" y="14.200" textAnchor="middle" fill="#fff" fontFamily="Open Sans" fontWeight="700" fontSize="7.500">1</text></svg></TraySlot>
          <TraySlot><svg width="16" height="14" viewBox="0 0 16 14"><rect x="5.500" y="4.500" width="9" height="7" fill="none" stroke="#fff" /><path d="M7 6h6v4H7zM15 6.500h1v3h-1z" fill="#fff" /><path d="M1.500 1v3M4.500 1v3M.5 4.500h5M1 5q0 2.500 2 2.500T5 5M3 7.500v3h3" fill="none" stroke="#fff" /></svg></TraySlot>
          <TraySlot><svg width="13" height="13" viewBox="0 0 13 13" fill="none" stroke="#aab3b6"><circle cx="10.500" cy="11" r="1.200" fill="#fff" stroke="none" /><path d="M7 12q0-4.500 5-4.500M4 12q.5-7.500 8-7.500M1 12Q1.500 1.500 12 1.500" /></svg></TraySlot>
          <TraySlot><svg width="17" height="14" viewBox="0 0 17 14" fill="none" stroke="#fff"><path d="M1 5h2.500L6.500 1.500v11L3.500 9H1z" /><path d="M8.800 5q1.400 2 0 4" /><path d="M11 3.500q2.600 3.500 0 7M13.500 2q3.600 5 0 10" stroke="#7d898e" /></svg></TraySlot>
          <Clock>12:40<br />04/10/2021</Clock>
          <svg width="18" height="16" viewBox="0 0 18 16" fill="none" stroke="#fff" strokeWidth="1.200"><path d="M1 1h16v11.500h-5.500L9 15l-2.500-2.500H1z" /></svg>
          <DesktopEdge />
        </Tray>
      </Taskbar>
    </Screen>
  );
}
